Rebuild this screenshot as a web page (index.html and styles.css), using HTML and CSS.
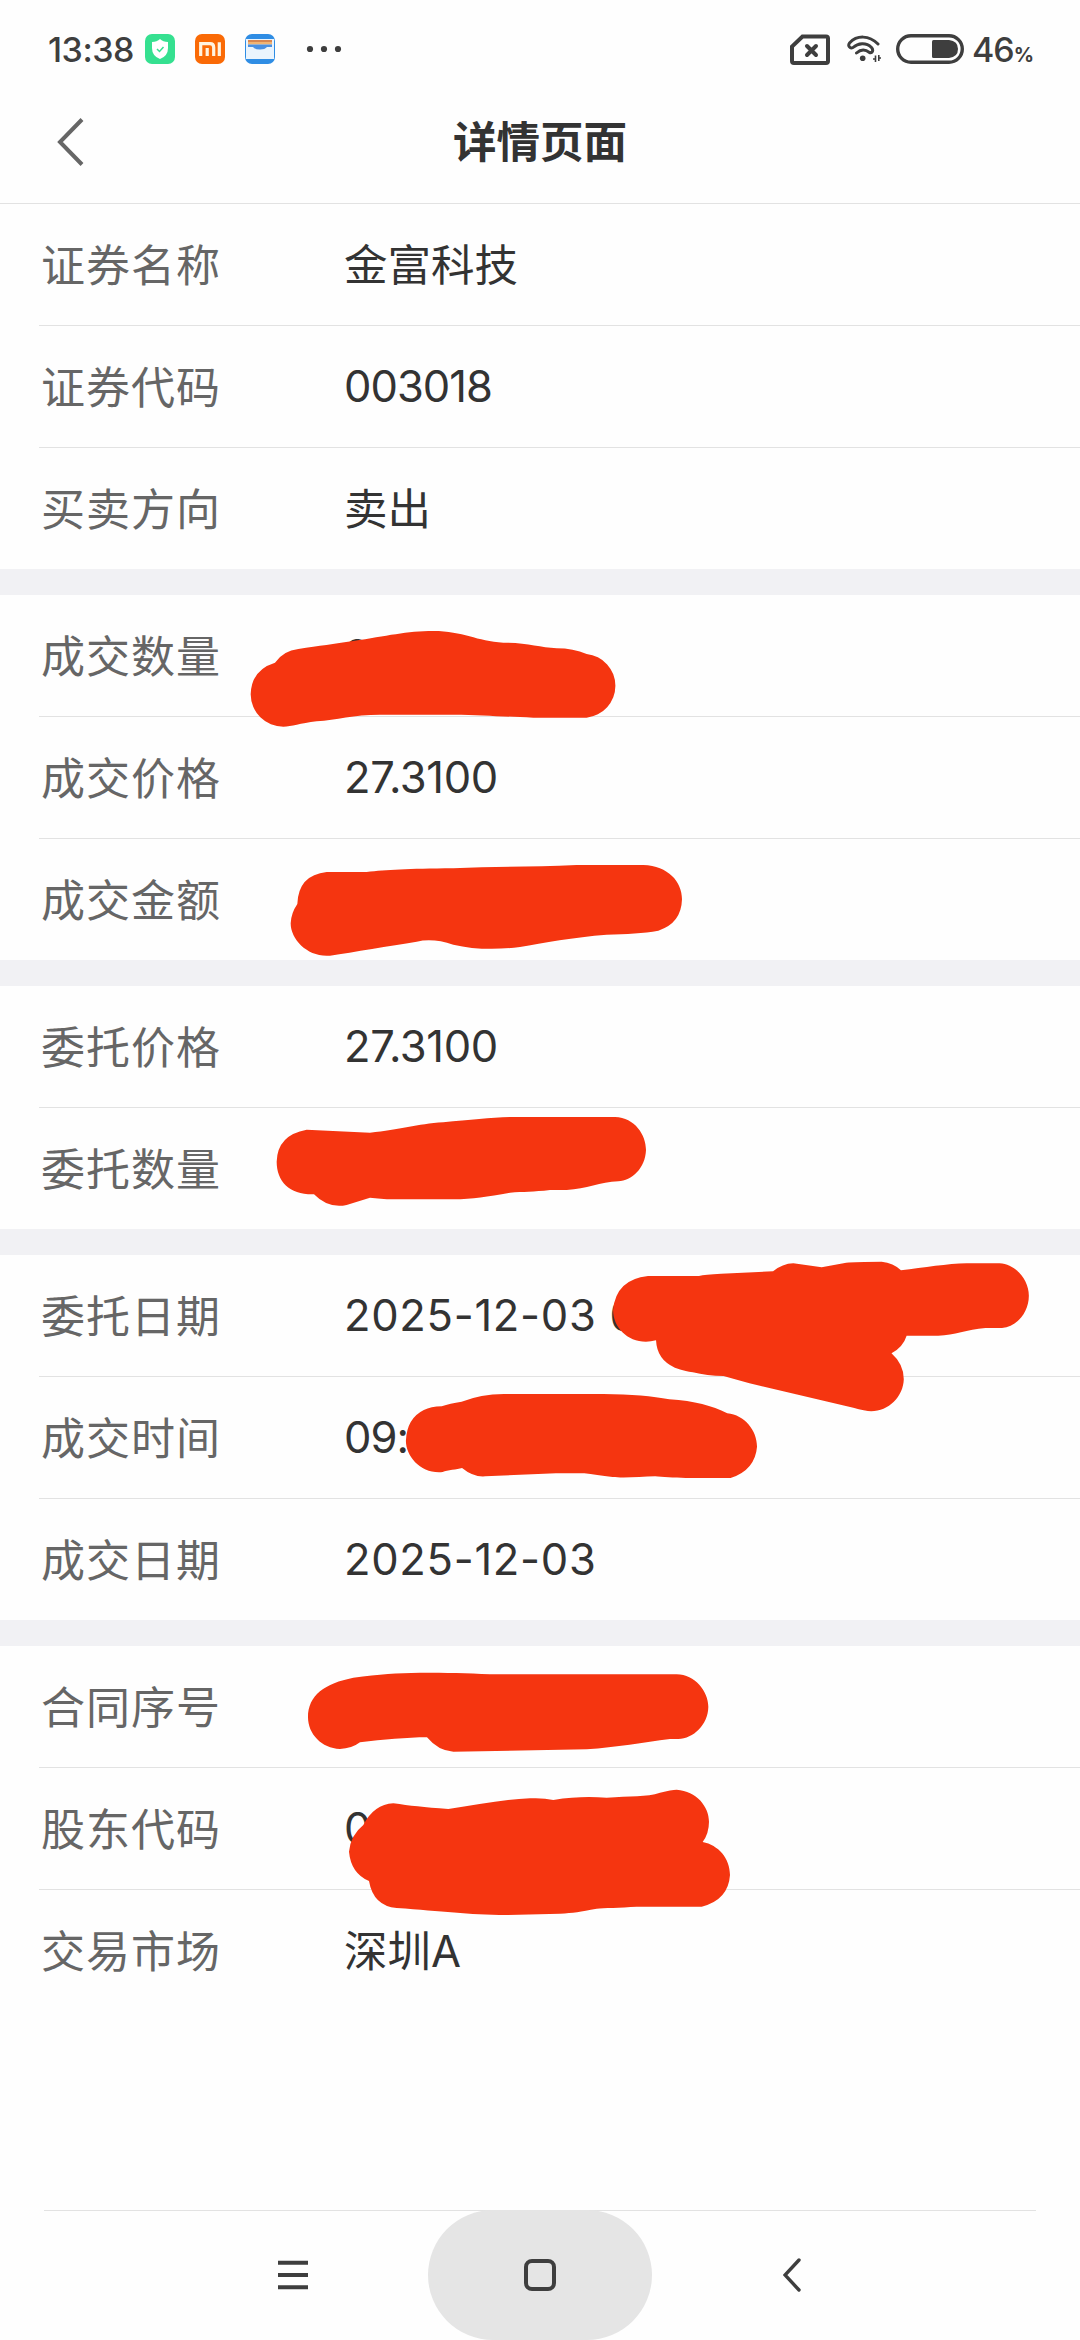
FILE: index.html
```html
<!DOCTYPE html>
<html lang="zh-CN">
<head>
    <meta charset="UTF-8">
    <meta name="viewport" content="width=device-width, initial-scale=1.0">
    <title>详情页面</title>
    <link rel="stylesheet" href="styles.css">
</head>
<body>
    <div class="statusbar">
        <span class="time">13:38</span>
        <div class="apps">
            <svg width="30" height="30" viewBox="0 0 30 30">
                <rect width="30" height="30" rx="7" fill="#35e090"/>
                <path d="M15 5 Q18 8 23 8 V14 Q23 22 15 25 Q7 22 7 14 V8 Q12 8 15 5Z" fill="#fff"/>
                <path d="M12 15 L14.5 17.5 L18.5 13" fill="none" stroke="#35e090" stroke-width="1.5"/>
            </svg>
            <svg width="30" height="30" viewBox="0 0 30 30">
                <rect width="30" height="30" rx="7" fill="#fa6a06"/>
                <path d="M5.7 22 V9.7 H15 Q18.7 9.7 18.7 13.5 V22 M12.2 14 V22 M24.3 8.3 V22" fill="none" stroke="#fff3e0" stroke-width="3.2"/>
            </svg>
            <svg width="30" height="30" viewBox="0 0 30 30">
                <rect width="30" height="30" rx="7" fill="#2f8de4"/>
                <path d="M1 5 H29 V25 H1Z" fill="#eaf4fd"/>
                <path d="M3 6 H27 V8 H3Z" fill="#d98650"/>
                <path d="M3 8 H27 V10.5 H3Z" fill="#f2b473"/>
                <path d="M3 10.5 H27 V13 H22 Q20 15.5 15 15.5 Q10 15.5 8 13 H3Z" fill="#4a90e2"/>
            </svg>
        </div>
        <svg class="dots" width="36" height="8" viewBox="0 0 36 8">
            <circle cx="4" cy="4" r="3.1"/>
            <circle cx="18" cy="4" r="3.1"/>
            <circle cx="32" cy="4" r="3.1"/>
        </svg>
        <div class="signals">
            <svg class="sim" width="40" height="32" viewBox="0 0 40 32">
                <path d="M12.5 3.5 H36 Q38 3.5 38 5.5 V28 Q38 30 36 30 H4 Q2 30 2 28 V13.5Z"/>
                <path d="M17 13 L26 22 M26 13 L17 22" stroke-linecap="round"/>
            </svg>
            <svg class="wifi" width="36" height="32" viewBox="0 0 36 32">
                <path d="M31 11 C22 2 10 2 2.5 10 C0.5 13 3 16 6 14.5 C11 10 19 9 24.5 14.5 C27 17.5 25 20.5 22.5 19.5 C18 16 14 16 9.5 20" stroke-linecap="round"/>
                <circle cx="15.7" cy="25.3" r="2.8" class="solid"/>
                <path d="M28.5 22.5 V29 M31.8 22 V28" stroke-width="1.6"/>
                <path d="M26 26 H28.5 M31.8 25 H34" stroke-width="1.6"/>
            </svg>
            <svg class="battery" width="68" height="30" viewBox="0 0 68 30">
                <rect x="1.7" y="1.7" width="64.6" height="26.6" rx="13.3"/>
                <path d="M37.5 6 H53 Q62 7 62 15 Q62 23 53 24 H37.5 Q36 24 36 22.5 V7.5 Q36 6 37.5 6Z" class="solid"/>
            </svg>
            <span class="level">46<small>%</small></span>
        </div>
    </div>

    <header class="header">
        <svg class="back" width="28" height="50" viewBox="0 0 28 50">
            <path d="M25 2.5 L3 25 L25 47.5"/>
        </svg>
        <h1>详情页面</h1>
    </header>

    <main>
        <section class="group">
            <div class="row"><span class="label">证券名称</span><span class="value">金富科技</span></div>
            <div class="row"><span class="label">证券代码</span><span class="value code">003018</span></div>
            <div class="row"><span class="label">买卖方向</span><span class="value">卖出</span></div>
        </section>
        <section class="group">
            <div class="row"><span class="label">成交数量</span><span class="value code">2</span></div>
            <div class="row"><span class="label">成交价格</span><span class="value price">27.3100</span></div>
            <div class="row"><span class="label">成交金额</span><span class="value"></span></div>
        </section>
        <section class="group">
            <div class="row"><span class="label">委托价格</span><span class="value price">27.3100</span></div>
            <div class="row"><span class="label">委托数量</span><span class="value"></span></div>
        </section>
        <section class="group">
            <div class="row"><span class="label">委托日期</span><span class="value date">2025-12-03 0</span></div>
            <div class="row"><span class="label">成交时间</span><span class="value code">09:</span></div>
            <div class="row"><span class="label">成交日期</span><span class="value date">2025-12-03</span></div>
        </section>
        <section class="group">
            <div class="row"><span class="label">合同序号</span><span class="value"></span></div>
            <div class="row"><span class="label">股东代码</span><span class="value code">0</span></div>
            <div class="row"><span class="label">交易市场</span><span class="value">深圳A</span></div>
        </section>
    </main>

    <nav class="navbar">
        <div class="nav-item menu">
            <svg width="30" height="30" viewBox="0 0 30 30"><path d="M0 2.7 H30 M0 15 H30 M0 27.3 H30"/></svg>
        </div>
        <div class="nav-item home">
            <svg width="32" height="32" viewBox="0 0 32 32"><rect x="2" y="2" width="28" height="28" rx="6"/></svg>
        </div>
        <div class="nav-item">
            <svg width="18" height="34" viewBox="0 0 18 34"><path d="M16 2 L2 17 L16 32" stroke-width="3.4" stroke-linecap="round"/></svg>
        </div>
    </nav>

    <!-- marker strokes over the private values -->
    <svg class="marker" width="1080" height="2340" viewBox="0 0 1080 2340">
        <g transform="translate(220 600) scale(0.33333)">
            <path d="M92 283 Q94 210 165 188 Q190 152 235 147 C300 137 340 132 400 123 C500 108 560 93 640 93 C730 93 770 124 850 128 C920 128 960 142 1010 145 Q1060 145 1100 162 A96 96 0 0 1 1100 353 H940 C850 350 790 345 700 344 H480 C400 344 350 360 290 364 C240 370 215 380 190 380 A98 98 0 0 1 92 283Z"/>
            <path d="M232 912 Q235 825 320 816 H440 C500 810 560 806 700 805 C820 798 940 802 1070 795 H1270 C1345 798 1386 845 1386 898 Q1384 970 1315 992 C1270 1000 1220 1002 1160 1004 C1060 1012 970 1028 900 1041 Q790 1055 700 1034 Q640 1014 590 1025 C510 1038 400 1056 330 1067 C265 1073 212 1020 212 970 Q213 940 232 912Z"/>
        </g>
        <g transform="translate(260 1090) scale(0.33333)">
            <path d="M50 215 Q52 135 140 119 L330 128 C420 120 470 102 550 97 C630 89 690 83 750 81 H1065 C1125 83 1158 135 1158 180 C1156 235 1115 272 1075 274 C1020 276 980 297 920 300 H870 C820 306 790 305 750 308 C680 320 640 327 580 328 H400 Q360 327 330 323 L260 345 Q205 357 162 313 C90 315 50 275 50 215Z"/>
        </g>
        <g transform="translate(320 1230) scale(0.47194 0.33333)">
            <path d="M621 240 Q627 148 695 138 H803 Q815 133 850 131 L960 124 Q980 101 1003 100 L1063 112 L1115 98 Q1135 95 1190 95 Q1215 98 1231 121 C1280 113 1330 101 1370 100 H1440 C1475 103 1502 150 1502 197 C1502 245 1478 290 1445 294 H1410 C1370 299 1345 316 1310 317 H1243 Q1236 350 1211 370 Q1237 403 1237 448 C1236 500 1205 544 1168 544 Q1155 543 1130 533 L910 460 Q880 448 855 438 Q820 438 790 427 Q775 424 752 413 Q714 390 712 331 C662 350 621 300 621 240Z"/>
            <path d="M182 632 Q184 565 220 540 Q235 530 258 529 Q275 520 300 515 Q340 493 390 492 H600 C660 493 705 498 740 508 C795 513 830 527 863 550 C900 555 926 602 926 650 Q922 720 870 744 H775 C750 744 725 740 710 739 C680 741 640 744 620 741 Q585 735 560 730 H500 L350 739 Q325 742 301 714 C290 719 270 719 260 726 C215 733 182 680 182 632Z"/>
        </g>
        <g transform="translate(280 1640) scale(0.33333)">
            <path d="M84 232 C84 165 135 130 220 113 C300 102 350 99 420 98 C500 98 560 99 630 103 H1190 C1245 103 1285 155 1285 200 C1284 255 1240 295 1195 297 H1170 C1090 307 1010 322 920 328 L520 335 Q475 333 441 292 C380 292 310 299 240 307 Q215 326 180 327 C125 325 84 282 84 232Z"/>
            <path d="M207 635 Q212 585 250 555 Q282 493 340 490 C390 497 430 502 505 507 C590 495 670 478 750 475 Q790 473 820 480 C880 470 930 470 980 473 C1050 467 1100 472 1140 458 Q1175 449 1190 449 C1250 453 1287 500 1287 545 Q1287 580 1268 606 C1315 615 1350 655 1350 705 Q1345 780 1265 800 H1070 C1020 803 970 804 950 806 C900 815 880 819 840 821 L680 825 C560 824 490 814 350 804 Q280 798 267 723 Q213 700 207 635Z"/>
        </g>
    </svg>
</body>
</html>
```
FILE: styles.css
```css
* {
    box-sizing: border-box;
}
body {
    position: relative;
    display: flex;
    flex-direction: column;
    height: 2340px;
    margin: 0;
    background-color: #fefefe;
    color: #333;
    font-family: Inter, 'Noto Sans CJK SC', sans-serif;
}
svg {
    display: block;
    flex: none;
}
.statusbar {
    display: flex;
    align-items: center;
    height: 98px;
    padding: 0 47px 0 48px;
    color: #3e3e3e;
}
.time {
    width: 97px;
    padding-top: 1px;
    font-size: 34px;
    font-weight: 500;
    letter-spacing: -0.5px;
}
.apps {
    display: flex;
    gap: 20px;
}
.dots {
    margin-left: 31px;
    fill: #3e3e3e;
}
.signals {
    display: flex;
    align-items: center;
    margin-left: auto;
    fill: none;
    stroke: #3e3e3e;
    stroke-width: 4;
}
.solid {
    fill: #3e3e3e;
    stroke: none;
}
.wifi {
    margin-left: 17px;
    stroke-width: 3;
}
.battery {
    margin-left: 13px;
    stroke-width: 3.4;
}
.level {
    width: 61px;
    margin-left: 8px;
    padding-top: 1px;
    font-size: 34px;
    font-weight: 500;
    letter-spacing: -1px;
    white-space: nowrap;
}
.level small {
    font-size: 20px;
    font-weight: 700;
}
.header {
    display: grid;
    grid-template-columns: 200px 1fr 200px;
    align-items: center;
    height: 106px;
    padding-bottom: 18px;
    border-bottom: 1px solid #e2e2e2;
}
.back {
    margin-left: 57px;
    fill: none;
    stroke: #666;
    stroke-width: 4;
}
.header h1 {
    margin: 0;
    font-size: 43.5px;
    font-weight: 700;
    line-height: 60px;
    text-align: center;
}
.group + .group {
    border-top: 26px solid #f1f1f4;
}
.row {
    display: flex;
    align-items: center;
    height: 122px;
    margin-left: 39px;
    padding-left: 2px;
    border-bottom: 1px solid #e2e2e2;
    white-space: nowrap;
}
.row:last-child {
    height: 121px;
    border-bottom: none;
}
.label {
    width: 303px;
    padding-top: 2px;
    color: #666;
    font-size: 44px;
    letter-spacing: 1px;
    line-height: 60px;
}
.value {
    font-size: 43.5px;
    line-height: 60px;
}
.code,
.price,
.date {
    padding-bottom: 2px;
}
.code {
    letter-spacing: -1px;
}
.price {
    letter-spacing: -0.4px;
}
.date {
    letter-spacing: 0.7px;
}
.navbar {
    display: flex;
    align-items: center;
    justify-content: center;
    gap: 28px;
    height: 130px;
    margin: auto 44px 0;
    box-shadow: inset 0 1px #e2e2e2;
}
.nav-item {
    display: flex;
    align-items: center;
    justify-content: center;
    width: 224px;
    height: 130px;
    fill: none;
    stroke: #3e3e3e;
    stroke-width: 4;
}
.menu {
    padding-left: 10px;
}
.home {
    border-radius: 65px;
    background-color: #e5e5e5;
}
.marker {
    position: absolute;
    top: 0;
    left: 0;
    fill: #f53510;
    pointer-events: none;
}
```
